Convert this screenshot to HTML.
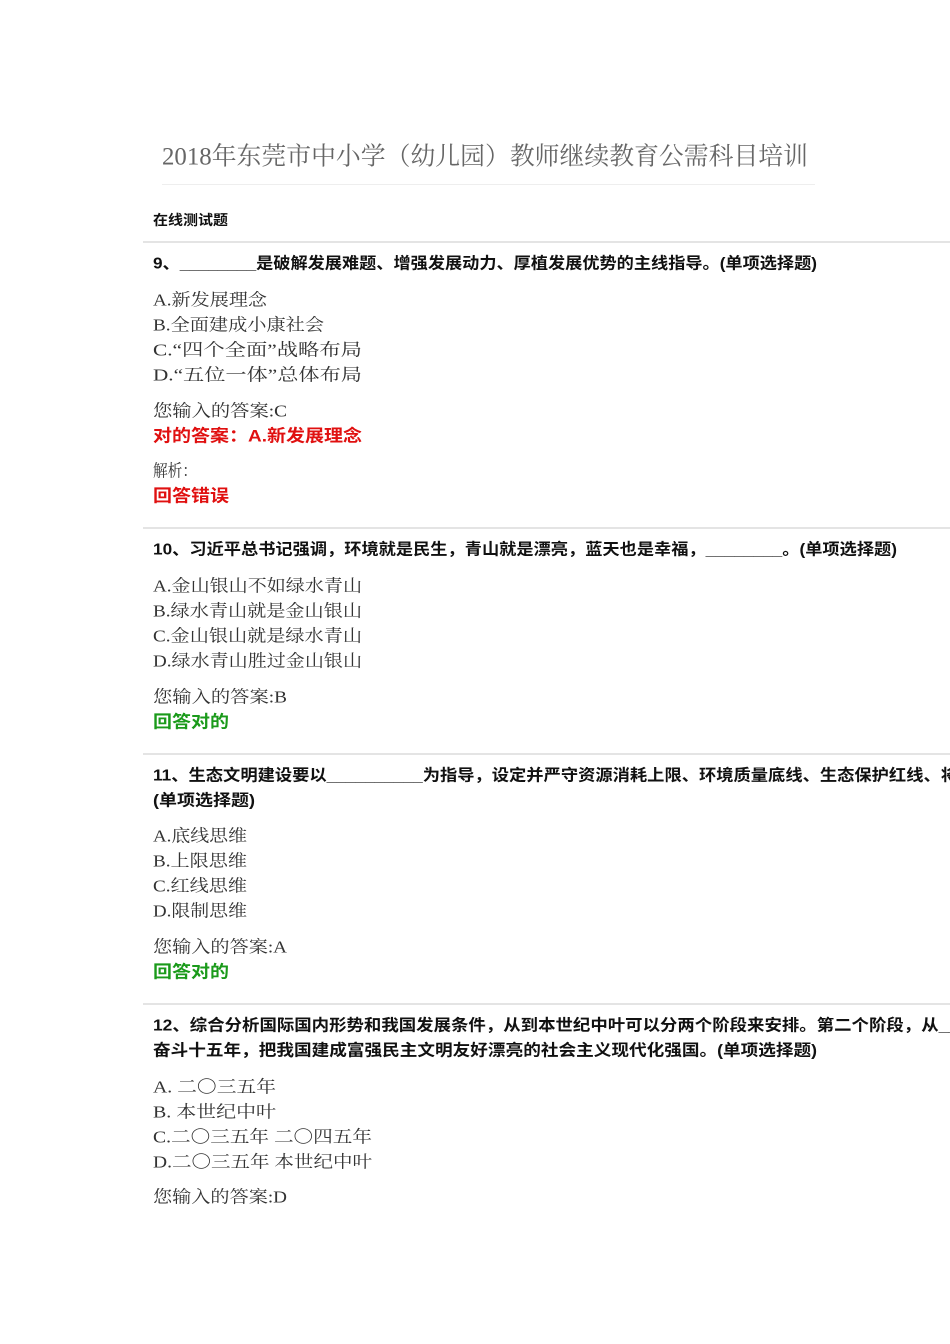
<!DOCTYPE html>
<html><head><meta charset="utf-8"><style>
html,body{margin:0;padding:0;background:#fff;width:950px;height:1344px;overflow:hidden}
svg{display:block}
.t{font-family:"Liberation Serif","Noto Serif CJK SC",serif;font-size:25px;fill:#666}
.b{font-family:"Liberation Sans","Noto Sans CJK SC",sans-serif;font-weight:bold;fill:#111}
.o{font-family:"Liberation Serif","Noto Serif CJK SC",serif;font-size:17px;fill:#333}
.r{font-family:"Liberation Sans","Noto Sans CJK SC",sans-serif;font-weight:bold;font-size:17px;fill:#e01010}
.g{font-family:"Liberation Sans","Noto Sans CJK SC",sans-serif;font-weight:bold;font-size:17px;fill:#1a9a1a}
</style></head><body>
<svg width="950" height="1344" viewBox="0 0 950 1344" dominant-baseline="central">
<text class="t" x="162" y="157" textLength="646" lengthAdjust="spacingAndGlyphs">2018年东莞市中小学（幼儿园）教师继续教育公需科目培训</text>
<rect x="162" y="184" width="653" height="1" fill="#eee"/>
<text class="b" font-size="14" x="153" y="220" textLength="75" lengthAdjust="spacingAndGlyphs">在线测试题</text>
<rect x="143" y="241" width="807" height="2" fill="#e4e4e4"/>

<text class="b" font-size="16" x="153" y="264" textLength="664" lengthAdjust="spacingAndGlyphs">9、________是破解发展难题、增强发展动力、厚植发展优势的主线指导。(单项选择题)</text>
<text class="o" x="153" y="300" textLength="114" lengthAdjust="spacingAndGlyphs">A.新发展理念</text>
<text class="o" x="153" y="325" textLength="171" lengthAdjust="spacingAndGlyphs">B.全面建成小康社会</text>
<text class="o" x="153" y="350" textLength="209" lengthAdjust="spacingAndGlyphs">C.“四个全面”战略布局</text>
<text class="o" x="153" y="375" textLength="209" lengthAdjust="spacingAndGlyphs">D.“五位一体”总体布局</text>
<text class="o" x="153" y="411" textLength="134" lengthAdjust="spacingAndGlyphs">您输入的答案:C</text>
<text class="r" x="153" y="436" textLength="209" lengthAdjust="spacingAndGlyphs">对的答案：A.新发展理念</text>
<text class="o" x="153" y="471" textLength="44" lengthAdjust="spacingAndGlyphs">解析：</text>
<text class="r" x="153" y="496" textLength="76" lengthAdjust="spacingAndGlyphs">回答错误</text>
<rect x="143" y="527" width="807" height="2" fill="#e4e4e4"/>

<text class="b" font-size="16" x="153" y="550" textLength="744" lengthAdjust="spacingAndGlyphs">10、习近平总书记强调，环境就是民生，青山就是漂亮，蓝天也是幸福，________。(单项选择题)</text>
<text class="o" x="153" y="586" textLength="209" lengthAdjust="spacingAndGlyphs">A.金山银山不如绿水青山</text>
<text class="o" x="153" y="611" textLength="209" lengthAdjust="spacingAndGlyphs">B.绿水青山就是金山银山</text>
<text class="o" x="153" y="636" textLength="209" lengthAdjust="spacingAndGlyphs">C.金山银山就是绿水青山</text>
<text class="o" x="153" y="661" textLength="209" lengthAdjust="spacingAndGlyphs">D.绿水青山胜过金山银山</text>
<text class="o" x="153" y="697" textLength="134" lengthAdjust="spacingAndGlyphs">您输入的答案:B</text>
<text class="g" x="153" y="722" textLength="76" lengthAdjust="spacingAndGlyphs">回答对的</text>
<rect x="143" y="753" width="807" height="2" fill="#e4e4e4"/>

<text class="b" font-size="16" x="153" y="776" textLength="805" lengthAdjust="spacingAndGlyphs">11、生态文明建设要以__________为指导，设定并严守资源消耗上限、环境质量底线、生态保护红线、将</text>
<text class="b" font-size="16" x="153" y="801" textLength="102" lengthAdjust="spacingAndGlyphs">(单项选择题)</text>
<text class="o" x="153" y="836" textLength="94" lengthAdjust="spacingAndGlyphs">A.底线思维</text>
<text class="o" x="153" y="861" textLength="94" lengthAdjust="spacingAndGlyphs">B.上限思维</text>
<text class="o" x="153" y="886" textLength="94" lengthAdjust="spacingAndGlyphs">C.红线思维</text>
<text class="o" x="153" y="911" textLength="94" lengthAdjust="spacingAndGlyphs">D.限制思维</text>
<text class="o" x="153" y="947" textLength="134" lengthAdjust="spacingAndGlyphs">您输入的答案:A</text>
<text class="g" x="153" y="972" textLength="76" lengthAdjust="spacingAndGlyphs">回答对的</text>
<rect x="143" y="1003" width="807" height="2" fill="#e4e4e4"/>

<text class="b" font-size="16" x="153" y="1026" textLength="805" lengthAdjust="spacingAndGlyphs">12、综合分析国际国内形势和我国发展条件，从到本世纪中叶可以分两个阶段来安排。第二个阶段，从__</text>
<text class="b" font-size="16" x="153" y="1051" textLength="664" lengthAdjust="spacingAndGlyphs">奋斗十五年，把我国建成富强民主文明友好漂亮的社会主义现代化强国。(单项选择题)</text>
<text class="o" x="153" y="1087" textLength="123" lengthAdjust="spacingAndGlyphs">A.  二〇三五年</text>
<text class="o" x="153" y="1112" textLength="123" lengthAdjust="spacingAndGlyphs">B.  本世纪中叶</text>
<text class="o" x="153" y="1137" textLength="219" lengthAdjust="spacingAndGlyphs">C.二〇三五年 二〇四五年</text>
<text class="o" x="153" y="1162" textLength="219" lengthAdjust="spacingAndGlyphs">D.二〇三五年 本世纪中叶</text>
<text class="o" x="153" y="1197" textLength="134" lengthAdjust="spacingAndGlyphs">您输入的答案:D</text>
</svg>
</body></html>
